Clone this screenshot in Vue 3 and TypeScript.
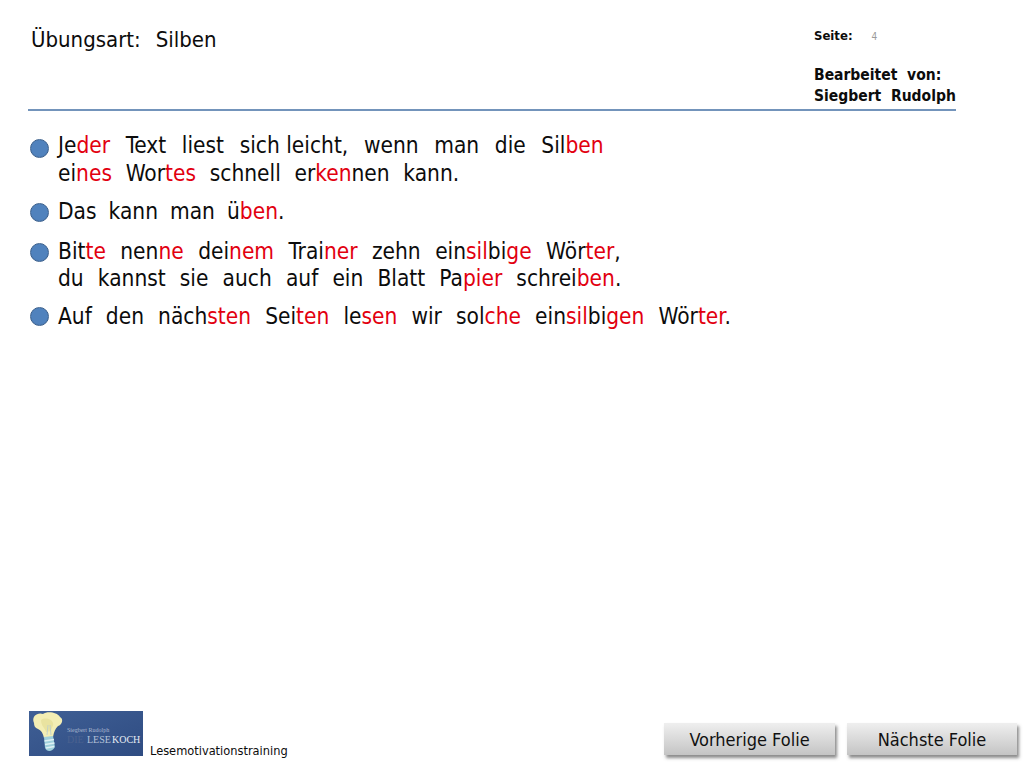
<script setup lang="ts">
interface Seg { text: string; red: boolean; tight: boolean }
interface Line { raw: string; spacing: number }

function parse(raw: string): Seg[] {
  return raw.split(/(\[[^\]]*\]|\{[^}]*\})/).filter(Boolean).map((p) => {
    if (p.startsWith('[')) return { text: p.slice(1, -1), red: true, tight: false }
    if (p.startsWith('{')) return { text: p.slice(1, -1), red: false, tight: true }
    return { text: p, red: false, tight: false }
  })
}

const bullets: { cls: string; lines: Line[] }[] = [
  { cls: 'b1', lines: [
    { raw: 'Je[der] Text liest sich{ }leicht, wenn man die Sil[ben]', spacing: 9.2 },
    { raw: 'ei[nes] Wor[tes] schnell er[ken]nen kann.', spacing: 7.3 },
  ] },
  { cls: 'b2', lines: [{ raw: 'Das kann man ü[ben].', spacing: 5.6 }] },
  { cls: 'b3', lines: [
    { raw: 'Bit[te] nen[ne] dei[nem] Trai[ner] zehn ein[sil]bi[ge] Wör[ter],', spacing: 8 },
    { raw: 'du kannst sie auch auf ein Blatt Pa[pier] schrei[ben].', spacing: 7.7 },
  ] },
  { cls: 'b4', lines: [
    { raw: 'Auf den näch[sten] Sei[ten] le[sen] wir sol[che] ein[sil]bi[gen] Wör[ter].', spacing: 7.65 },
  ] },
]
</script>

<template>
  <div class="page">
    <header class="head">
      <div class="title">Übungsart:<span class="title-val">Silben</span></div>
      <div class="meta">
        <div class="seite">Seite:<span class="num">4</span></div>
        <div class="author">Bearbeitet&nbsp; von:<br />Siegbert&nbsp; Rudolph</div>
      </div>
    </header>

    <main class="body">
      <div v-for="b in bullets" :key="b.cls" class="item" :class="b.cls">
        <span class="dot"></span>
        <div class="text">
          <div v-for="l in b.lines" :key="l.raw" class="line" :style="{ wordSpacing: l.spacing + 'px' }">
            <span v-for="(s, i) in parse(l.raw)" :key="i" :class="{ red: s.red, tight: s.tight }">{{ s.text }}</span>
          </div>
        </div>
      </div>
    </main>

    <footer class="foot">
      <div class="brand">
        <svg class="logo" width="114" height="45" viewBox="0 0 114 45">
          <defs>
            <linearGradient id="lg" x1="0" y1="0" x2="1" y2="1">
              <stop offset="0" stop-color="#3f5f95" />
              <stop offset="1" stop-color="#2f4c82" />
            </linearGradient>
            <filter id="soft"><feGaussianBlur stdDeviation="0.5" /></filter>
          </defs>
          <rect width="114" height="45" fill="url(#lg)" />
          <g filter="url(#soft)">
            <path d="M5 12 C2 5 9 1 14 3 C18 0 28 1 31 6 C35 8 33 14 29 15 C26 18 25 21 24 26 L15 27 C14 22 12 19 9 18 C6 17 5 15 5 12Z" fill="#f3eeb4" />
            <path d="M12 9 C16 6 23 8 24 12 C25 15 22 17 22 20 L17 21 C16 17 12 15 12 9Z" fill="#e9e3a0" />
            <path d="M15 26 L24 25 L26 36 C23 41 18 41 16 37Z" fill="#9fd0dc" />
            <path d="M15.5 30 L25 28.5 M16 33.5 L25.5 32 M17 37 L25 35.5" stroke="#dff1f4" stroke-width="1.4" fill="none" />
            <path d="M18 24 L19 14 M22 24 L21 14" stroke="#b9cdd0" stroke-width="0.8" fill="none" />
          </g>
          <text x="38" y="21" class="lt1">Siegbert Rudolph</text>
          <text y="32" class="lt2"><tspan x="38" fill="#4b6290">DIE</tspan><tspan x="58" fill="#b4c1d8">LESE</tspan><tspan x="83" fill="#e6ebf3">KOCH</tspan></text>
        </svg>
        <span class="brand-text">Lesemotivationstraining</span>
      </div>
      <div class="btns">
        <button class="btn prev">Vorherige Folie</button>
        <button class="btn next">Nächste Folie</button>
      </div>
    </footer>
  </div>
</template>

<style>
html, body { margin: 0; background: #fff; }
</style>

<style scoped>
.page {
  width: 1024px;
  height: 768px;
  box-sizing: border-box;
  display: flex;
  flex-direction: column;
  font-family: "DejaVu Sans Condensed", "DejaVu Sans", sans-serif;
  font-stretch: condensed;
  color: #0c0c0c;
  overflow: hidden;
  background: #fff;
}
.head {
  margin: 0 68px 0 28px;
  height: 111px;
  box-sizing: border-box;
  border-bottom: 2px solid #7394bb;
  display: flex;
  justify-content: space-between;
  padding: 25px 0 0 3px;
}
.title { font-size: 22px; line-height: 30px; }
.title-val { margin-left: 15px; }
.meta { width: 142px; }
.seite { font-size: 13px; line-height: 18px; padding-top: 2px; font-weight: 600; }
.num { color: #9a9a9a; font-size: 10px; font-weight: 400; margin-left: 19px; }
.author { font-size: 15.5px; font-weight: 700; line-height: 21px; margin-top: 19px; white-space: nowrap; }
.body {
  flex: 1;
  padding: 21px 0 0 30px;
  font-size: 22.5px;
  line-height: 27.5px;
}
.item { display: flex; align-items: flex-start; gap: 9px; }
.b2 { margin-top: 11px; }
.b3 { margin-top: 12px; }
.b4 { margin-top: 10px; }
.dot {
  width: 19px;
  height: 19px;
  flex: none;
  box-sizing: border-box;
  border-radius: 50%;
  background: radial-gradient(circle at 50% 45%, #5082bd 60%, #4672aa 100%);
  border: 1.5px solid #3a5f8c;
}
.b1 .dot { margin-top: 7px; }
.b2 .dot, .b3 .dot { margin-top: 5px; }
.b4 .dot { margin-top: 4.5px; }
.line { white-space: nowrap; }
.red { color: #e2000f; }
.tight { word-spacing: 0; }
.foot {
  height: 68px;
  flex: none;
  display: flex;
  justify-content: space-between;
  padding: 11px 7px 0 29px;
  box-sizing: border-box;
}
.brand { display: flex; align-items: flex-end; gap: 7px; height: 45px; }
.logo { display: block; flex: none; }
.brand-text { font-size: 12.7px; line-height: 16px; margin-bottom: -3px; }
.lt1 { font-family: "Liberation Serif", serif; font-size: 6px; fill: #aab8d0; }
.lt2 { font-family: "Liberation Serif", serif; font-size: 10px; }
.btns { display: flex; gap: 12px; padding-top: 12px; }
.btn {
  width: 171px;
  height: 32px;
  border: none;
  padding: 0;
  font: inherit;
  font-size: 18px;
  color: #111;
  background: linear-gradient(#efefef, #c4c4c4);
  box-shadow: 2px 3px 3px rgba(90, 90, 90, 0.7);
}
.btn.next { width: 170px; }
</style>
